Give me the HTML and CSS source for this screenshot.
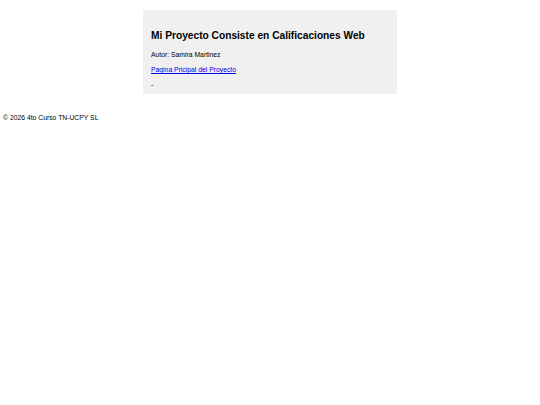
FILE: index.html
```html
<!DOCTYPE html>
<html lang="es">
<head>
<meta charset="utf-8">
<title>Mi Proyecto</title>
<link rel="stylesheet" href="styles.css">
</head>
<body>
<main class="card">
  <h1 class="title">Mi Proyecto Consiste en Calificaciones Web</h1>
  <p class="author">Autor: Samira Martinez</p>
  <p class="link-row"><a href="#" class="link">Pagina Pricipal del Proyecto</a></p>
  <p class="dash">-</p>
</main>
<footer class="footer">© 2026 4to Curso TN-UCPY SL</footer>
</body>
</html>
```
FILE: styles.css
```css
html, body {
  margin: 0;
  padding: 0;
  background: #ffffff;
  font-family: "Liberation Sans", Arial, sans-serif;
  color: #000;
}
.card {
  width: 238px;
  margin: 10px auto 0;
  padding: 19px 8px 5px;
  background: #f0f0f0;
}
.title {
  margin: 0 0 8px;
  font-size: 10.2px;
  line-height: 14px;
  font-weight: bold;
}
.author, .link-row, .dash {
  margin: 0 0 7px;
  font-size: 6.8px;
  line-height: 8px;
}
.dash {
  margin-bottom: 0;
}
.link {
  color: #0000ee;
  text-decoration: underline;
}
.footer {
  margin: 20px 0 0 3px;
  font-size: 6.8px;
  line-height: 8px;
}
```
